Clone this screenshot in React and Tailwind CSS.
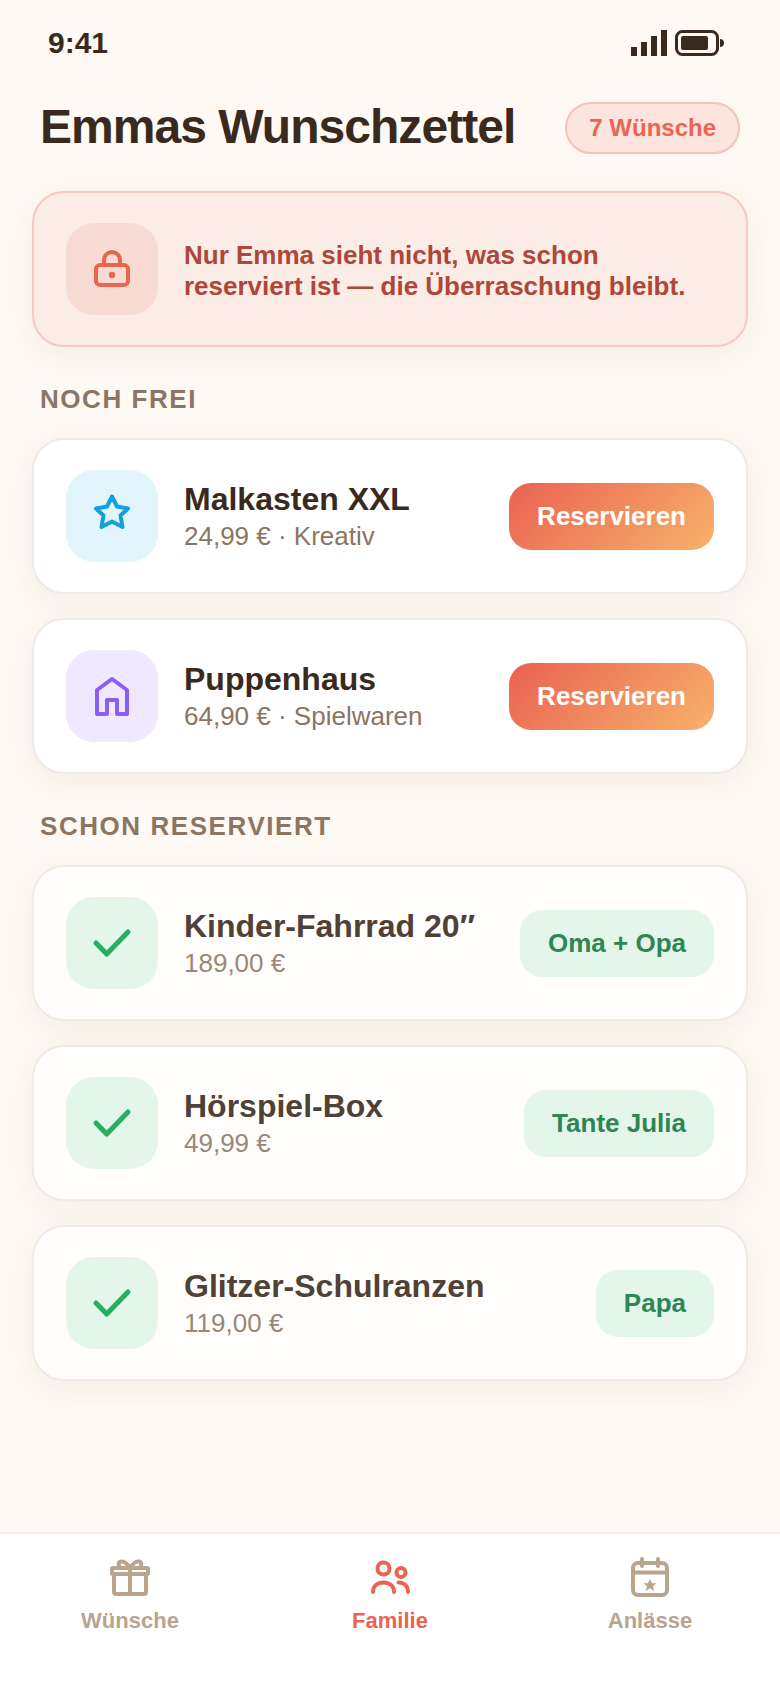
import React from 'react';

const SANS = { fontFamily: '"Liberation Sans", Arial, sans-serif' };

const LockIcon = () => (
  <svg width="44" height="44" viewBox="0 0 44 44" fill="none" stroke="#ec6450" strokeWidth="4" strokeLinecap="round" strokeLinejoin="round">
    <rect x="6" y="18" width="32" height="20" rx="4" />
    <path d="M14 18v-5a8 8 0 0 1 16 0v5" />
    <circle cx="22" cy="28" r="3.2" fill="#ec6450" stroke="none" />
  </svg>
);

const StarIcon = () => (
  <svg width="44" height="44" viewBox="0 0 44 44" fill="none" stroke="#12a0dc" strokeWidth="4" strokeLinejoin="round">
    <path d="M22 2.500 27 12.500 38 14.500 30.500 21.500 32.500 33 22 27.500 11.500 33 13.500 21.500 6 14.500 17 12.500Z" />
  </svg>
);

const HouseIcon = () => (
  <svg width="44" height="44" viewBox="0 0 44 44" fill="none" stroke="#8b5ff5" strokeWidth="4" strokeLinejoin="round">
    <path d="M7 40V16L22 5 37 16V40H27V26H17V40Z" />
  </svg>
);

const CheckIcon = () => (
  <svg width="44" height="44" viewBox="0 0 44 44" fill="none" stroke="#27ae60" strokeWidth="5" strokeLinecap="round" strokeLinejoin="round">
    <path d="M6 22 16.700 33 38 11" />
  </svg>
);

const GiftIcon = () => (
  <svg width="44" height="44" viewBox="0 0 44 44" fill="none" stroke="#b9a48d" strokeWidth="4" strokeLinecap="round" strokeLinejoin="round">
    <rect x="4" y="12" width="36" height="6" rx="1" />
    <path d="M6 18V36a2 2 0 0 0 2 2H36a2 2 0 0 0 2-2V18" />
    <path d="M22 12V38" />
    <path d="M22 12C19 7 16 5 13 5.500 10 6 10 10 13 12M22 12C25 7 28 5 31 5.500 34 6 34 10 31 12" />
  </svg>
);

const FamilyIcon = () => (
  <svg width="44" height="44" viewBox="0 0 44 44" fill="none" stroke="#ec6450" strokeWidth="4" strokeLinecap="round" strokeLinejoin="round">
    <circle cx="15.500" cy="12.500" r="6" />
    <circle cx="33" cy="16.500" r="4.500" />
    <path d="M5 36c0-6 4.500-9.500 10.500-9.500S26 30 26 36" />
    <path d="M30.500 26.500c5.500 0 9.500 3.500 9.500 9.500" />
  </svg>
);

const CalendarIcon = () => (
  <svg width="44" height="44" viewBox="0 0 44 44" fill="none" stroke="#b9a48d" strokeWidth="4" strokeLinecap="round" strokeLinejoin="round">
    <rect x="5" y="7" width="34" height="32" rx="5" />
    <path d="M5 16.500H39M14 3V10M30 3V10" />
    <path d="M22 23l2 4.300H28.500L25 30.300 26.200 35 22 32.300 17.800 35 19 30.300 15.500 27.300H20Z" fill="#b9a48d" stroke="none" />
  </svg>
);

const StatusIcons = () => (
  <div className="flex items-center gap-[8px]">
    <svg width="36" height="26" viewBox="0 0 36 26" fill="#3a2a1e">
      <rect x="0" y="17" width="6" height="9" />
      <rect x="10" y="12" width="6" height="14" />
      <rect x="20" y="6" width="6" height="20" />
      <rect x="30" y="0" width="6" height="26" />
    </svg>
    <svg width="50" height="26" viewBox="0 0 50 26" fill="none">
      <rect x="1.500" y="1.500" width="41" height="23" rx="6" stroke="#3a2a1e" strokeWidth="3" />
      <rect x="6" y="6" width="27" height="14" rx="2" fill="#3a2a1e" />
      <path d="M45 9c2.500 0 4 1.500 4 4s-1.500 4-4 4Z" fill="#3a2a1e" />
    </svg>
  </div>
);

const IconTile = ({ bg, children }) => (
  <div className={`flex h-[92px] w-[92px] shrink-0 items-center justify-center rounded-[28px] ${bg}`}>
    {children}
  </div>
);

const WishCard = ({ icon, tile, title, sub, action, reserved }) => (
  <div
    className={`flex h-[156px] items-center gap-[26px] rounded-[32px] border-2 border-[#efeae5] px-[32px] shadow-[0_8px_32px_rgba(90,60,30,0.06)] ${
      reserved ? 'bg-[#fffefc]' : 'bg-white'
    }`}
  >
    <IconTile bg={tile}>{icon}</IconTile>
    <div className="min-w-0 flex-1">
      <div className={`text-[32px] leading-[38px] font-bold whitespace-nowrap ${reserved ? 'text-[#4f4136]' : 'text-[#3a2a1e]'}`}>{title}</div>
      <div className={`mt-[2px] text-[26px] leading-[32px] ${reserved ? 'text-[#998878]' : 'text-[#8a7563]'}`}>{sub}</div>
    </div>
    {action}
  </div>
);

const ReserveButton = () => (
  <button className="flex h-[67px] items-center rounded-[22px] bg-[linear-gradient(135deg,#ea6150,#f7b26c)] px-[28px] text-[26px] font-bold text-white">
    Reservieren
  </button>
);

const Reserver = ({ name }) => (
  <div className="flex h-[67px] items-center rounded-[22px] bg-[#e3f6e9] px-[28px] text-[26px] font-bold text-[#2f8554] whitespace-nowrap">
    {name}
  </div>
);

const SectionLabel = ({ children, className }) => (
  <div className={`px-[8px] text-[26px] leading-[34px] font-bold tracking-[1.56px] text-[#8c7663] ${className}`}>{children}</div>
);

const NavItem = ({ icon, label, active }) => (
  <div className="flex flex-1 flex-col items-center gap-[7px]">
    {icon}
    <span className={`text-[22px] leading-[28px] font-bold ${active ? 'text-[#ec6450]' : 'text-[#b9a48d]'}`}>{label}</span>
  </div>
);

const App = () => {
  return (
    <div className="flex min-h-[1688px] flex-col bg-[#fef9f3]" style={SANS}>
      <div className="flex h-[86px] items-center justify-between pr-[55px] pl-[48px]">
        <span className="mb-[2px] text-[30px] font-bold text-[#3a2a1e]">9:41</span>
        <StatusIcons />
      </div>

      <div className="flex items-center justify-between px-[40px] pt-[10px]">
        <h1 className="mb-[2px] text-[48px] leading-[62px] font-bold tracking-[-0.96px] whitespace-nowrap text-[#3a2a1e]">Emmas Wunschzettel</h1>
        <div className="flex h-[52px] items-center rounded-full border-2 border-[#f6c3b9] bg-[#fce4df] px-[22px] text-[24px] font-bold whitespace-nowrap text-[#ec6450]">
          7 Wünsche
        </div>
      </div>

      <main className="flex flex-1 flex-col px-[32px] pt-[31px]">
        <div className="flex h-[156px] items-center gap-[26px] rounded-[32px] border-2 border-[#f7c9bf] bg-[#fbece6] px-[32px] shadow-[0_8px_32px_rgba(90,60,30,0.06)]">
          <IconTile bg="bg-[#f8dcd4]"><LockIcon /></IconTile>
          <p className="pt-[4px] text-[26px] leading-[31px] font-bold text-[#ae463a]">
            Nur Emma sieht nicht, was schon reserviert ist — die Überraschung bleibt.
          </p>
        </div>

        <SectionLabel className="mt-[35px] mb-[22px]">NOCH FREI</SectionLabel>
        <div className="flex flex-col gap-[24px]">
          <WishCard icon={<StarIcon />} tile="bg-[#e2f5fd]" title="Malkasten XXL" sub="24,99 € · Kreativ" action={<ReserveButton />} />
          <WishCard icon={<HouseIcon />} tile="bg-[#f0e8fe]" title="Puppenhaus" sub="64,90 € · Spielwaren" action={<ReserveButton />} />
        </div>

        <SectionLabel className="mt-[35px] mb-[22px]">SCHON RESERVIERT</SectionLabel>
        <div className="flex flex-col gap-[24px]">
          <WishCard reserved icon={<CheckIcon />} tile="bg-[#e3f6e9]" title="Kinder-Fahrrad 20″" sub="189,00 €" action={<Reserver name="Oma + Opa" />} />
          <WishCard reserved icon={<CheckIcon />} tile="bg-[#e3f6e9]" title="Hörspiel-Box" sub="49,99 €" action={<Reserver name="Tante Julia" />} />
          <WishCard reserved icon={<CheckIcon />} tile="bg-[#e3f6e9]" title="Glitzer-Schulranzen" sub="119,00 €" action={<Reserver name="Papa" />} />
        </div>
      </main>

      <nav className="flex h-[156px] items-start border-t-2 border-[#efeae5] bg-white pt-[22px]">
        <NavItem icon={<GiftIcon />} label="Wünsche" />
        <NavItem icon={<FamilyIcon />} label="Familie" active />
        <NavItem icon={<CalendarIcon />} label="Anlässe" />
      </nav>
    </div>
  );
};

export default App;
